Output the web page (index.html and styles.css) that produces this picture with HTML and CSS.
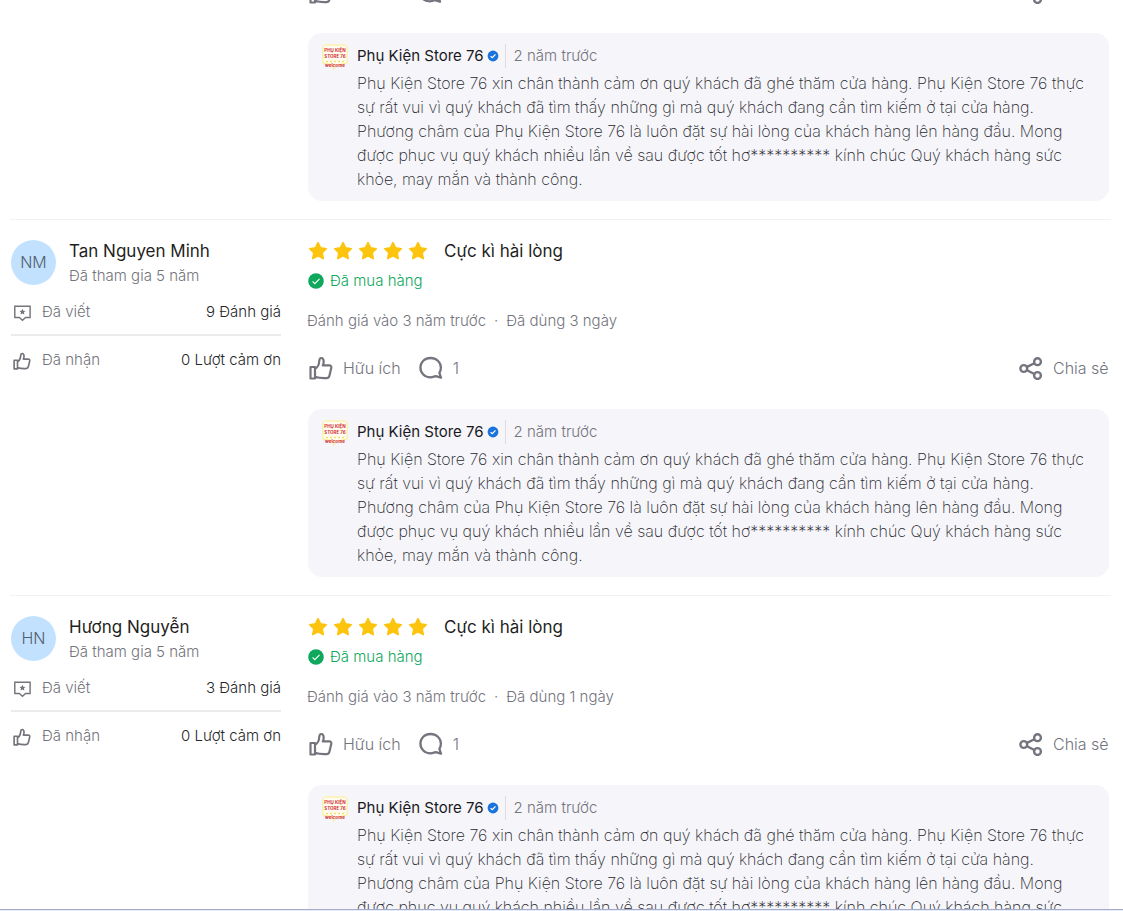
FILE: index.html
```html
<!DOCTYPE html>
<html lang="vi">
<head>
  <meta charset="UTF-8" />
  <meta name="viewport" content="width=device-width, initial-scale=1.0" />
  <title>Đánh giá sản phẩm</title>
  <link rel="stylesheet" href="styles.css">
</head>
<body>
  <!-- shared icons -->
  <svg class="sprite" aria-hidden="true">
    <symbol id="thumb" viewBox="0 0 24 24">
      <path d="M1.500 11h4.500v11.500H1.500zM6 13c2.500-1.500 4-4 4.200-7.500C10.300 3 11 2 12.200 2c1.600 0 2.500 1.600 2.500 3.700 0 1.400-.4 2.600-.9 3.700h6.500c1.500 0 2.300 1 2 2.400l-1.800 7.600c-.4 1.600-1.500 2.700-3.200 2.700-3.800.2-7.500 0-11.300-1.300" fill="none" stroke="currentColor" stroke-width="2.200" stroke-linejoin="round" stroke-linecap="round"/>
    </symbol>
    <symbol id="comment" viewBox="0 0 24 24">
      <path d="M11.500 2C5.700 2 1.400 6.200 1.400 11.600s4.300 9.700 10.100 9.700c2 0 3.700-.4 5.200-1.200l5.300 1.500-1.600-4.700c1-1.500 1.500-3.300 1.500-5.300C21.900 6.200 17.300 2 11.500 2z" fill="none" stroke="currentColor" stroke-width="2.300" stroke-linejoin="round"/>
    </symbol>
    <symbol id="share" viewBox="0 0 24 24">
      <g fill="none" stroke="currentColor" stroke-width="2.400">
        <circle cx="4.800" cy="12.500" r="3.400"/>
        <circle cx="18.500" cy="5.700" r="3.400"/>
        <circle cx="18.500" cy="19.500" r="3.400"/>
        <path d="M8 10.900l7.400-3.700M8 14.200l7.400 3.800"/>
      </g>
    </symbol>
    <symbol id="written" viewBox="0 0 20 20">
      <path d="M2 2.500h17v12.500h-5l-3.500 3.200L7 15H2z" fill="none" stroke="currentColor" stroke-width="1.600"/>
      <path d="M10.500 5.200l1 2.300 2.400.2-1.800 1.600.5 2.400-2.100-1.200-2.100 1.200.5-2.400-1.800-1.600 2.400-.2z" fill="currentColor"/>
    </symbol>
    <symbol id="star" viewBox="0 0 20 20">
      <path d="M10 1.600l2.600 5.300 5.700.8-4.100 4.100 1 5.800L10 14.900l-5.200 2.700 1-5.800L1.700 7.700l5.700-.8z" fill="#fdc40e" stroke="#fdc40e" stroke-width="1.600" stroke-linejoin="round"/>
    </symbol>
    <symbol id="bought" viewBox="0 0 16 16">
      <circle cx="8" cy="8" r="7.800" fill="#0da85c"/>
      <path d="M4.600 8.400l2.200 2.200 4.700-4.800" fill="none" stroke="#fff" stroke-width="1.100"/>
    </symbol>
    <symbol id="verified" viewBox="0 0 12 12">
      <circle cx="6" cy="6" r="5.400" fill="#1a73d9"/>
      <path d="M3.600 6.200l1.700 1.500 3.200-3.400" fill="none" stroke="#fff" stroke-width="1.200"/>
    </symbol>
    <symbol id="shop" viewBox="0 0 26 26">
      <path d="M3 1h20l2 2v16l-9 2-5 4 .5-4L1 19V3z" fill="#fffdf0" stroke="#fbee8a" stroke-width="1"/>
      <g fill="#d3303a" font-family="Inter, sans-serif" font-size="4.500" font-weight="700" text-anchor="middle">
        <text x="13" y="8">PHỤ KIỆN</text>
        <text x="13" y="14">STORE 76</text>
        <text x="13" y="23">welcome</text>
      </g>
      <path d="M4 17.500h18" stroke="#f6e36a" stroke-width="1.500" stroke-dasharray="2 2"/>
    </symbol>
  </svg>

  <main class="reviews">
    <article class="review review-first">
      <div class="content">
        <div class="actions">
          <button type="button" class="action action-like" aria-label="Hữu ích"><svg class="icon"><use href="#thumb"/></svg></button>
          <button type="button" class="action" aria-label="Bình luận"><svg class="icon"><use href="#comment"/></svg></button>
          <button type="button" class="action action-share" aria-label="Chia sẻ"><svg class="icon"><use href="#share"/></svg></button>
        </div>
        <section class="reply">
          <svg class="shop-logo"><use href="#shop"/></svg>
          <div class="reply-main">
            <header class="reply-head">
              <span class="shop-name">Phụ Kiện Store 76</span>
              <svg class="verified"><use href="#verified"/></svg>
              <span class="reply-time">2 năm trước</span>
            </header>
            <p class="reply-text">Phụ Kiện Store 76 xin chân thành cảm ơn quý khách đã ghé thăm cửa hàng. Phụ Kiện Store 76 thực sự rất vui vì quý khách đã tìm thấy những gì mà quý khách đang cần tìm kiếm ở tại cửa hàng. Phương châm của Phụ Kiện Store 76 là luôn đặt sự hài lòng của khách hàng lên hàng đầu. Mong được phục vụ quý khách nhiều lần về sau được tốt hơ********** kính chúc Quý khách hàng sức khỏe, may mắn và thành công.</p>
          </div>
        </section>
      </div>
    </article>

    <article class="review">
      <aside class="user">
        <div class="profile">
          <div class="avatar">NM</div>
          <div>
            <div class="user-name">Tan Nguyen Minh</div>
            <div class="user-joined">Đã tham gia 5 năm</div>
          </div>
        </div>
        <div class="stat"><svg class="stat-icon"><use href="#written"/></svg>Đã viết <span class="stat-value">9 Đánh giá</span></div>
        <div class="stat"><svg class="stat-icon"><use href="#thumb"/></svg>Đã nhận <span class="stat-value">0 Lượt cảm ơn</span></div>
      </aside>
      <div class="content">
        <div class="rating">
          <div class="stars">
            <svg class="star"><use href="#star"/></svg>
            <svg class="star"><use href="#star"/></svg>
            <svg class="star"><use href="#star"/></svg>
            <svg class="star"><use href="#star"/></svg>
            <svg class="star"><use href="#star"/></svg>
          </div>
          <span class="rating-title">Cực kì hài lòng</span>
        </div>
        <div class="bought"><svg class="bought-icon"><use href="#bought"/></svg>Đã mua hàng</div>
        <div class="meta"><span>Đánh giá vào 3 năm trước</span><span>·</span><span>Đã dùng 3 ngày</span></div>
        <div class="actions">
          <button type="button" class="action action-like"><svg class="icon"><use href="#thumb"/></svg>Hữu ích</button>
          <button type="button" class="action"><svg class="icon"><use href="#comment"/></svg>1</button>
          <button type="button" class="action action-share"><svg class="icon"><use href="#share"/></svg>Chia sẻ</button>
        </div>
        <section class="reply">
          <svg class="shop-logo"><use href="#shop"/></svg>
          <div class="reply-main">
            <header class="reply-head">
              <span class="shop-name">Phụ Kiện Store 76</span>
              <svg class="verified"><use href="#verified"/></svg>
              <span class="reply-time">2 năm trước</span>
            </header>
            <p class="reply-text">Phụ Kiện Store 76 xin chân thành cảm ơn quý khách đã ghé thăm cửa hàng. Phụ Kiện Store 76 thực sự rất vui vì quý khách đã tìm thấy những gì mà quý khách đang cần tìm kiếm ở tại cửa hàng. Phương châm của Phụ Kiện Store 76 là luôn đặt sự hài lòng của khách hàng lên hàng đầu. Mong được phục vụ quý khách nhiều lần về sau được tốt hơ********** kính chúc Quý khách hàng sức khỏe, may mắn và thành công.</p>
          </div>
        </section>
      </div>
    </article>

    <article class="review">
      <aside class="user">
        <div class="profile">
          <div class="avatar">HN</div>
          <div>
            <div class="user-name">Hương Nguyễn</div>
            <div class="user-joined">Đã tham gia 5 năm</div>
          </div>
        </div>
        <div class="stat"><svg class="stat-icon"><use href="#written"/></svg>Đã viết <span class="stat-value">3 Đánh giá</span></div>
        <div class="stat"><svg class="stat-icon"><use href="#thumb"/></svg>Đã nhận <span class="stat-value">0 Lượt cảm ơn</span></div>
      </aside>
      <div class="content">
        <div class="rating">
          <div class="stars">
            <svg class="star"><use href="#star"/></svg>
            <svg class="star"><use href="#star"/></svg>
            <svg class="star"><use href="#star"/></svg>
            <svg class="star"><use href="#star"/></svg>
            <svg class="star"><use href="#star"/></svg>
          </div>
          <span class="rating-title">Cực kì hài lòng</span>
        </div>
        <div class="bought"><svg class="bought-icon"><use href="#bought"/></svg>Đã mua hàng</div>
        <div class="meta"><span>Đánh giá vào 3 năm trước</span><span>·</span><span>Đã dùng 1 ngày</span></div>
        <div class="actions">
          <button type="button" class="action action-like"><svg class="icon"><use href="#thumb"/></svg>Hữu ích</button>
          <button type="button" class="action"><svg class="icon"><use href="#comment"/></svg>1</button>
          <button type="button" class="action action-share"><svg class="icon"><use href="#share"/></svg>Chia sẻ</button>
        </div>
        <section class="reply">
          <svg class="shop-logo"><use href="#shop"/></svg>
          <div class="reply-main">
            <header class="reply-head">
              <span class="shop-name">Phụ Kiện Store 76</span>
              <svg class="verified"><use href="#verified"/></svg>
              <span class="reply-time">2 năm trước</span>
            </header>
            <p class="reply-text">Phụ Kiện Store 76 xin chân thành cảm ơn quý khách đã ghé thăm cửa hàng. Phụ Kiện Store 76 thực sự rất vui vì quý khách đã tìm thấy những gì mà quý khách đang cần tìm kiếm ở tại cửa hàng. Phương châm của Phụ Kiện Store 76 là luôn đặt sự hài lòng của khách hàng lên hàng đầu. Mong được phục vụ quý khách nhiều lần về sau được tốt hơ********** kính chúc Quý khách hàng sức khỏe, may mắn và thành công.</p>
          </div>
        </section>
      </div>
    </article>
  </main>
  <div class="bottom-edge"></div>
</body>
</html>
```
FILE: styles.css
```css
* {
  box-sizing: border-box;
}

body {
  margin: 0;
  height: 100vh;
  overflow: hidden;
  background-color: #fff;
  color: #27272a;
  font-family: Inter, "Noto Sans", sans-serif;
  font-size: 15px;
  font-weight: 300;
  line-height: 24px;
}

.sprite {
  display: none;
}

.reviews {
  padding: 0 12px 0 10px;
}

.review {
  display: grid;
  grid-template-columns: 271px minmax(0, 1fr);
  column-gap: 26px;
  padding: 19px 2px 18px 0;
  border-top: 1px solid #f2f2f2;
}

/* the list is scrolled, only the end of this review shows */
.review-first {
  margin-top: -20px;
  padding-top: 0;
  border-top: none;
}

.content {
  grid-column: 2;
}

.profile {
  display: flex;
  gap: 13px;
  margin-bottom: 12px;
  padding-left: 1px;
}

.avatar {
  width: 45px;
  height: 45px;
  margin-top: 1px;
  border-radius: 50%;
  background-color: #c2e1ff;
  color: #52606d;
  font-size: 16px;
  line-height: 45px;
  text-align: center;
}

.user-name,
.rating-title {
  font-size: 17px;
  font-weight: 400;
  color: #1f1f23;
}

.user-joined {
  margin-top: 1px;
}

.user-joined,
.stat,
.meta {
  color: #74747d;
}

.stat {
  display: flex;
  align-items: center;
  margin-left: 1px;
}

.stat + .stat {
  margin-top: 10px;
  padding-top: 12px;
  border-top: 2px solid #ebebeb;
}

.stat-icon {
  width: 20px;
  height: 20px;
  padding: 1px;
  margin: 1px 10px 0 1px;
}

.stat-value {
  margin-left: auto;
  color: #27272a;
}

.rating,
.stars,
.bought,
.meta,
.actions,
.action,
.reply-head {
  display: flex;
  align-items: center;
}

.rating {
  gap: 16px;
}

.stars {
  gap: 5px;
  padding-left: 1px;
}

.star {
  width: 20px;
  height: 20px;
}

.bought {
  gap: 6px;
  margin-top: 6px;
  padding-left: 1px;
  color: #0da85c;
}

.bought-icon {
  width: 16px;
  height: 16px;
}

.meta {
  gap: 8px;
  margin: 16px 0 23px;
}

.actions {
  gap: 18px;
  padding-left: 2px;
}

.action {
  gap: 10px;
  padding: 0;
  border: none;
  background: none;
  color: #74747d;
  font-family: inherit;
  font-size: 16px;
  font-weight: 300;
  line-height: 24px;
  cursor: pointer;
}

.action-like {
  min-width: 91px;
}

.action-share {
  min-width: 90px;
  margin-left: auto;
}

.icon {
  width: 24px;
  height: 24px;
}

.reply {
  display: flex;
  gap: 9px;
  margin-top: 29px;
  margin-left: 1px;
  padding: 11px 16px 10px 14px;
  border-radius: 14px;
  background-color: #f5f5fa;
}

.shop-logo {
  flex: none;
  width: 26px;
  height: 26px;
}

.shop-name {
  color: #1a1a1e;
  font-weight: 400;
}

.verified {
  width: 12px;
  height: 12px;
  margin: 0 6px 0 3px;
}

.reply-time {
  padding-left: 8px;
  border-left: 1px solid #dddde3;
  color: #74747d;
}

.reply-text {
  margin: 3px 0 0;
  color: #27272a;
  font-size: 16px;
  font-weight: 200;
}

.bottom-edge {
  position: fixed;
  right: 0;
  bottom: 0;
  left: 0;
  height: 2px;
  border-top: 1px solid #a3acc9;
  background-color: #e4ecf8;
}
```
